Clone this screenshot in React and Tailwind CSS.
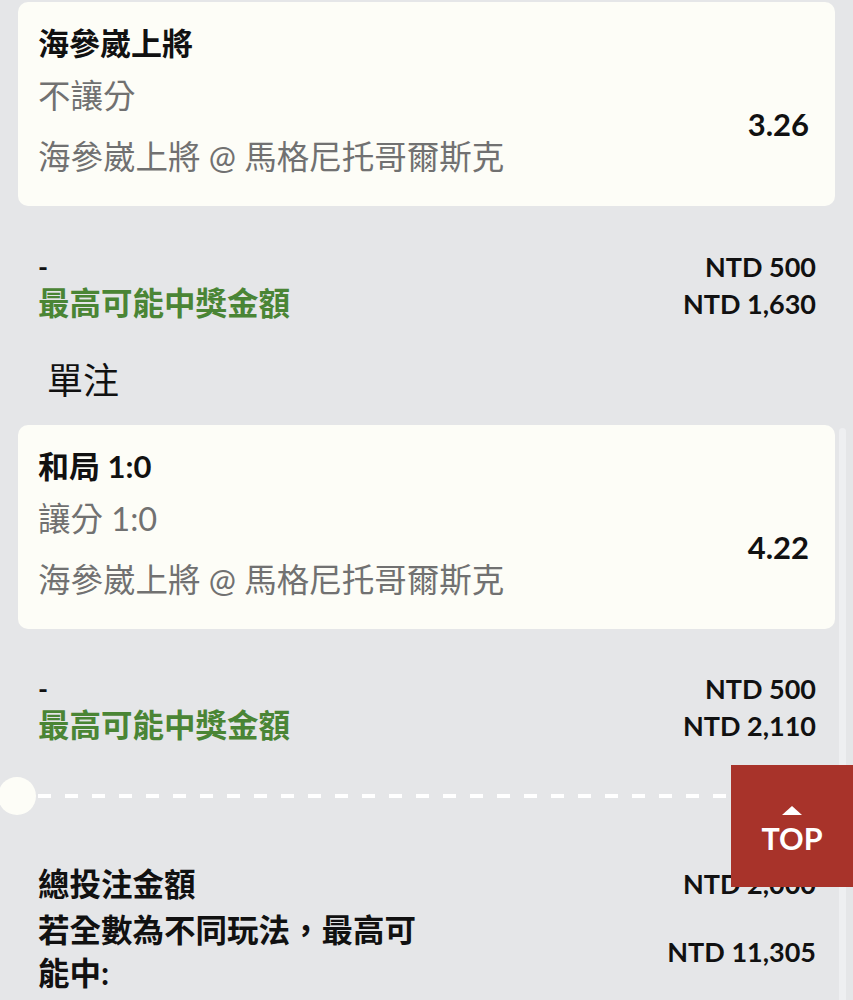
const font = { fontFamily: 'Lato, "Noto Sans CJK TC", sans-serif' };

function BetCard({ title, sub, match, odds, top }) {
  return (
    <div className={`mx-[18px] ${top} rounded-[10px] bg-[#fdfdf7] pl-[20px] pr-[26px] pt-[20px] pb-[28px]`}>
      <div className="h-[42px] text-[31px] font-bold leading-[42px] text-[#111]">{title}</div>
      <div className="flex items-center justify-between">
        <div className="text-[32.5px] leading-[42px] text-[#717171]">
          <div className="mt-[11px]">{sub}</div>
          <div className="mt-[19px]">{match}</div>
        </div>
        <div className="pt-[6px] text-[31px] font-bold text-[#111]">{odds}</div>
      </div>
    </div>
  );
}

function Summary({ stake, win, mt }) {
  return (
    <div className={`${mt} flex justify-between pl-[38px] pr-[37px] leading-[37px]`}>
      <div>
        <div className="text-[27px] font-bold text-[#111]">-</div>
        <div className="text-[31.5px] font-bold text-[#4a8535]">最高可能中獎金額</div>
      </div>
      <div className="text-right text-[27px] font-bold text-[#111]">
        <div>{stake}</div>
        <div>{win}</div>
      </div>
    </div>
  );
}

export default function App() {
  return (
    <div className="relative h-[1000px] overflow-hidden bg-[#e5e6e8]" style={font}>
      {/* scrollbar track */}
      <div className="absolute left-[839px] top-[428px] bottom-0 w-[7px] rounded-t-full bg-[#eeeff1]" />

      <BetCard
        top="mt-[2px]"
        title="海參崴上將"
        sub="不讓分"
        match="海參崴上將 @ 馬格尼托哥爾斯克"
        odds="3.26"
      />
      <Summary mt="mt-[42px]" stake="NTD 500" win="NTD 1,630" />

      <div className="mt-[38px] pl-[47px] text-[36px] leading-[40px] text-[#111]">單注</div>

      <BetCard
        top="mt-[25px]"
        title="和局 1:0"
        sub="讓分 1:0"
        match="海參崴上將 @ 馬格尼托哥爾斯克"
        odds="4.22"
      />
      <Summary mt="mt-[41px]" stake="NTD 500" win="NTD 2,110" />

      {/* divider */}
      <div className="mt-[33px] flex h-[38px] items-center">
        <div className="ml-[-2px] h-[38px] w-[38px] shrink-0 rounded-full bg-[#fdfdf7]" />
        <div className="ml-[2px] mr-[36px] h-[4px] flex-1 bg-[repeating-linear-gradient(to_right,#ffffff_0_13px,transparent_13px_27px)]" />
      </div>

      {/* totals */}
      <div className="mt-[48px] pl-[38px] pr-[37px] text-[31.5px] font-bold text-[#111]">
        <div className="flex items-center justify-between leading-[42px]">
          <div>總投注金額</div>
          <div className="text-[27px]">NTD 2,000</div>
        </div>
        <div className="mt-[4px] flex items-center justify-between">
          <div className="w-[390px] leading-[43px]">若全數為不同玩法，最高可能中:</div>
          <div className="text-[27px]">NTD 11,305</div>
        </div>
      </div>

      {/* back to top */}
      <div className="absolute left-[731px] top-[765px] flex h-[122px] w-[122px] flex-col items-center justify-center bg-[#a8332a] text-white">
        <svg width="20" height="9" viewBox="0 0 20 9" className="mt-[8px]">
          <polygon points="10,0 20,9 0,9" fill="#fff" />
        </svg>
        <div className="mt-[6px] text-[30.5px] font-bold leading-[34px]">TOP</div>
      </div>
    </div>
  );
}
